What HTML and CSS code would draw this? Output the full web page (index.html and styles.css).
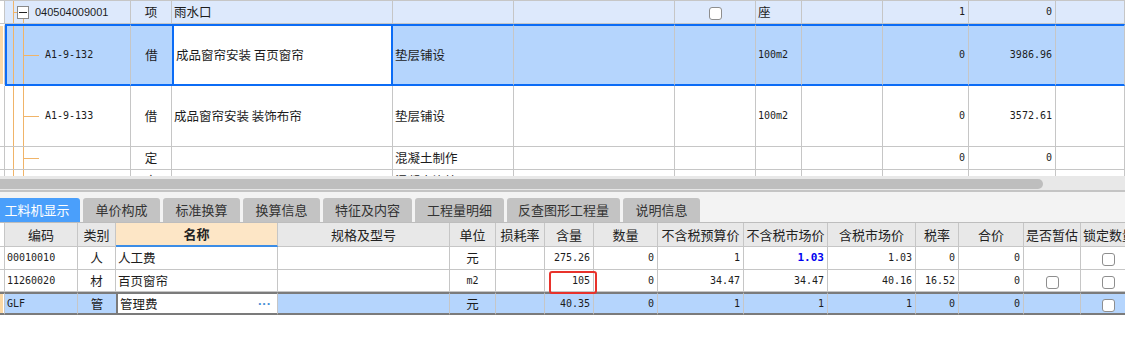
FILE: index.html
```html
<!DOCTYPE html>
<html lang="zh-CN">
<head>
  <meta charset="UTF-8">
  <meta name="viewport" content="width=device-width, initial-scale=1.0">
  <title>工料机显示</title>
  <link rel="stylesheet" href="styles.css">
</head>
<body>

  <!-- 清单 / 定额 -->
  <div class="tree-wrap">
    <table class="tree">
      <colgroup>
        <col><col><col><col><col><col><col><col><col><col><col><col>
      </colgroup>
      <tbody>
        <tr class="group">
          <td class="lead"></td>
          <td class="code"><span class="branch top"><span class="fold"></span></span><span class="qd">040504009001</span></td>
          <td class="c">项</td>
          <td>雨水口</td>
          <td></td>
          <td></td>
          <td class="c"><span class="cb"></span></td>
          <td>座</td>
          <td></td>
          <td class="r n">1</td>
          <td class="r n">0</td>
          <td></td>
        </tr>
        <tr class="sel tall">
          <td class="lead"></td>
          <td class="code n"><span class="branch"></span>A1-9-132</td>
          <td class="c">借</td>
          <td class="active">成品窗帘安装 百页窗帘</td>
          <td>垫层铺设</td>
          <td></td>
          <td></td>
          <td class="n">100m2</td>
          <td></td>
          <td class="r n">0</td>
          <td class="r n">3986.96</td>
          <td></td>
        </tr>
        <tr class="tall">
          <td class="lead"></td>
          <td class="code n"><span class="branch"></span>A1-9-133</td>
          <td class="c">借</td>
          <td>成品窗帘安装 装饰布帘</td>
          <td>垫层铺设</td>
          <td></td>
          <td></td>
          <td class="n">100m2</td>
          <td></td>
          <td class="r n">0</td>
          <td class="r n">3572.61</td>
          <td></td>
        </tr>
        <tr>
          <td class="lead"></td>
          <td class="code"><span class="branch"></span></td>
          <td class="c">定</td>
          <td></td>
          <td>混凝土制作</td>
          <td></td>
          <td></td>
          <td></td>
          <td></td>
          <td class="r n">0</td>
          <td class="r n">0</td>
          <td></td>
        </tr>
        <tr class="clip">
          <td class="lead"></td>
          <td class="code"><span class="branch"></span></td>
          <td class="c">定</td>
          <td></td>
          <td>混凝土浇捣</td>
          <td></td>
          <td></td>
          <td></td>
          <td></td>
          <td></td>
          <td></td>
          <td></td>
        </tr>
      </tbody>
    </table>
  </div>

  <div class="hscroll"><div class="thumb"></div></div>

  <!-- 下方页签 -->
  <div class="tabs">
    <div class="tab on w80">工料机显示</div>
    <div class="tab w77">单价构成</div>
    <div class="tab w77">标准换算</div>
    <div class="tab w77">换算信息</div>
    <div class="tab w89">特征及内容</div>
    <div class="tab w89">工程量明细</div>
    <div class="tab w113">反查图形工程量</div>
    <div class="tab w77">说明信息</div>
  </div>

  <div class="detail">
    <table class="mat">
      <colgroup>
        <col><col><col><col><col><col><col><col><col><col><col><col><col><col><col><col>
      </colgroup>
      <thead>
        <tr>
          <th></th>
          <th>编码</th>
          <th>类别</th>
          <th class="sort">名称</th>
          <th>规格及型号</th>
          <th>单位</th>
          <th>损耗率</th>
          <th>含量</th>
          <th>数量</th>
          <th>不含税预算价</th>
          <th>不含税市场价</th>
          <th>含税市场价</th>
          <th>税率</th>
          <th>合价</th>
          <th>是否暂估</th>
          <th>锁定数量</th>
        </tr>
      </thead>
      <tbody>
        <tr>
          <td class="lead"></td>
          <td class="n">00010010</td>
          <td class="c">人</td>
          <td>人工费</td>
          <td></td>
          <td class="c">元</td>
          <td></td>
          <td class="r n">275.26</td>
          <td class="r n">0</td>
          <td class="r n">1</td>
          <td class="r n hot">1.03</td>
          <td class="r n">1.03</td>
          <td class="r n">0</td>
          <td class="r n">0</td>
          <td></td>
          <td class="c"><span class="cb"></span></td>
        </tr>
        <tr class="short">
          <td class="lead"></td>
          <td class="n">11260020</td>
          <td class="c">材</td>
          <td>百页窗帘</td>
          <td></td>
          <td class="c n">m2</td>
          <td></td>
          <td class="r n">105</td>
          <td class="r n">0</td>
          <td class="r n">34.47</td>
          <td class="r n">34.47</td>
          <td class="r n">40.16</td>
          <td class="r n">16.52</td>
          <td class="r n">0</td>
          <td class="c"><span class="cb"></span></td>
          <td class="c"><span class="cb"></span></td>
        </tr>
        <tr class="sel">
          <td class="lead"></td>
          <td class="n">GLF</td>
          <td class="c">管</td>
          <td class="active">管理费<span class="more">···</span></td>
          <td></td>
          <td class="c">元</td>
          <td></td>
          <td class="r n">40.35</td>
          <td class="r n">0</td>
          <td class="r n">1</td>
          <td class="r n">1</td>
          <td class="r n">1</td>
          <td class="r n">0</td>
          <td class="r n">0</td>
          <td></td>
          <td class="c"><span class="cb"></span></td>
        </tr>
      </tbody>
    </table>
    <div class="mark"></div>
  </div>

</body>
</html>
```

FILE: styles.css
```css
* {
  margin: 0;
  padding: 0;
  box-sizing: border-box;
}

body {
  width: 1125px;
  height: 341px;
  overflow: hidden;
  background: #fff;
  color: #1c1c1c;
  font-family: "Noto Sans CJK SC", "Noto Sans", sans-serif;
  font-size: 12.5px;
}

table {
  border-collapse: separate;
  border-spacing: 0;
  table-layout: fixed;
}

td, th {
  padding: 0 2px;
  white-space: nowrap;
  overflow: hidden;
  vertical-align: middle;
  border-right: 1px solid #c6c6c6;
  border-bottom: 1px solid #c6c6c6;
  line-height: 16px;
}

.c { text-align: center; }
.r { text-align: right; padding-right: 3px; }

.n {
  font-family: "DejaVu Sans Mono", "Liberation Mono", monospace;
  font-size: 10px;
}

.cb {
  display: inline-block;
  width: 13px;
  height: 13px;
  border: 1px solid #8e8e8e;
  border-radius: 3px;
  background: #fff;
  vertical-align: middle;
}

/* ---------- 上方树表 ---------- */
.tree-wrap {
  height: 176px;
  overflow: hidden;
}

.tree {
  width: 1125px;
  border-top: 1px solid #c6c6c6;
}

.tree col:nth-child(1) { width: 5px; }
.tree col:nth-child(2) { width: 126px; }
.tree col:nth-child(3) { width: 41px; }
.tree col:nth-child(4) { width: 221px; }
.tree col:nth-child(5) { width: 121px; }
.tree col:nth-child(6) { width: 161px; }
.tree col:nth-child(7) { width: 81px; }
.tree col:nth-child(8) { width: 46px; }
.tree col:nth-child(9) { width: 81px; }
.tree col:nth-child(10) { width: 86px; }
.tree col:nth-child(11) { width: 87px; }
.tree col:nth-child(12) { width: 69px; }

.tree td { height: 23px; }
.tree tr.tall td { height: 61px; }
.tree tr.sel td { height: 62px; }
.tree tr.clip td { vertical-align: top; padding-top: 3px; }
.tree tr.clip td.code { padding-top: 0; }

.lead { padding: 0; }

.tree tr.group td {
  background-color: #dde9fc;
}

.tree tr.group td.lead { background-color: #fff; }

/* 树线 */
.tree td.code { padding-left: 0; }

.branch {
  display: inline-block;
  width: 40px;
  height: 22px;
  vertical-align: middle;
  background-image:
    linear-gradient(#f0b469, #f0b469),
    linear-gradient(#f0b469, #f0b469),
    linear-gradient(#f0b469, #f0b469);
  background-size: 1px 100%, 1px 100%, 16px 1px;
  background-position: 8px 0, 18px 0, 18px 50%;
  background-repeat: no-repeat;
}

.tall .branch { height: 60px; }

.sel .branch {
  width: 38px;
  height: 58px;
  background-position: 6px 0, 16px 0, 16px 50%;
}

.clip .branch {
  background-size: 1px 100%, 1px 100%, 0 0;
}

.branch.top {
  display: inline-flex;
  align-items: flex-start;
  width: 30px;
  padding: 5px 0 0 12px;
  background-size: 1px 100%, 1px 4px, 4px 1px;
  background-position: 8px 0, 18px 18px, 8px 11px;
}

.fold {
  display: inline-block;
  width: 12px;
  height: 13px;
  border: 1px solid #8a8a8a;
  background: linear-gradient(#222, #222) center / 8px 1px no-repeat, #fff;
}

.qd {
  font-family: "Liberation Sans", Arial, sans-serif;
  font-size: 11px;
  vertical-align: middle;
}

.tree tr.sel td {
  background-color: #b5d5fd;
  border-top: 2px solid #0b6cf6;
  border-bottom: 2px solid #0b6cf6;
}

.tree tr.sel td.lead {
  background: linear-gradient(to right, #fcd9a6 3px, #fff 3px);
  border-top-color: #fff;
  border-bottom-color: #fff;
}

.tree tr.sel td.code { border-left: 2px solid #0b6cf6; }

.tree tr.sel td:nth-child(3) { border-right: none; }

.tree tr.sel td.active {
  background-color: #fff;
  border-left: 2px solid #0b6cf6;
  border-right: 2px solid #0b6cf6;
}

/* ---------- 滚动条 ---------- */
.hscroll {
  height: 14px;
  padding-top: 3px;
  background: #e8e8e8;
}

.thumb {
  width: 1043px;
  height: 10px;
  background: #bebebe;
  border-radius: 0 5px 5px 0;
}

/* ---------- 页签 ---------- */
.tabs {
  height: 32px;
  padding-top: 6px;
  display: flex;
  gap: 3px;
  background: #f3f3f3;
  border-top: 2px solid #c4c4c4;
}

.tab {
  height: 24px;
  line-height: 24px;
  text-align: center;
  font-size: 13px;
  color: #333;
  background: #c3c3c3;
  border-radius: 3px 3px 0 0;
}

.tab.on {
  background: #4a9ffb;
  color: #fff;
  border-radius: 0 3px 0 0;
  padding-right: 6px;
}

.w77 { width: 77px; }
.w80 { width: 80px; }
.w89 { width: 89px; }
.w113 { width: 113px; }

/* ---------- 工料机表 ---------- */
.detail {
  position: relative;
}

.mat {
  width: 1137px;
  border-top: 1px solid #bdbdbd;
}

.mat col:nth-child(1) { width: 5px; }
.mat col:nth-child(2) { width: 73px; }
.mat col:nth-child(3) { width: 38px; }
.mat col:nth-child(4) { width: 162px; }
.mat col:nth-child(5) { width: 172px; }
.mat col:nth-child(6) { width: 46px; }
.mat col:nth-child(7) { width: 49px; }
.mat col:nth-child(8) { width: 49px; }
.mat col:nth-child(9) { width: 64px; }
.mat col:nth-child(10) { width: 86px; }
.mat col:nth-child(11) { width: 84px; }
.mat col:nth-child(12) { width: 88px; }
.mat col:nth-child(13) { width: 43px; }
.mat col:nth-child(14) { width: 65px; }
.mat col:nth-child(15) { width: 57px; }
.mat col:nth-child(16) { width: 56px; }

.mat th {
  height: 24px;
  background: #e8e8e8;
  font-weight: normal;
  font-size: 13px;
  color: #222;
  text-align: center;
}

.mat th:first-child { background: #fff; }

.mat th.sort {
  background: #fde6c6;
  font-weight: bold;
  border-bottom: 2px solid #3b8de6;
}

.mat td { height: 23px; }
.mat tr.short td { height: 22px; }

.mat .hot {
  color: #0000f0;
  font-weight: bold;
  font-size: 11px;
}

.mat tr.sel td {
  background: #b5d5fd;
  border-top: 2px solid #7b7b7b;
  border-bottom: 2px solid #7b7b7b;
}

.mat tr.sel td.lead {
  background: linear-gradient(to right, #fcd9a6 3px, #fff 3px);
}

.mat tr.sel td:nth-child(3) { border-right: none; }

.mat tr.sel td.active {
  background: #fff;
  border-left: 2px solid #7b7b7b;
}

.more {
  float: right;
  padding-right: 4px;
  color: #4a8fd6;
  font-family: "Liberation Sans", Arial, sans-serif;
  font-size: 13px;
  font-weight: bold;
}

/* 含量 105 的红框提示 */
.mark {
  position: absolute;
  left: 549px;
  top: 49px;
  width: 48px;
  height: 23px;
  border: 2px solid #e8322b;
  border-radius: 3px;
}
```
